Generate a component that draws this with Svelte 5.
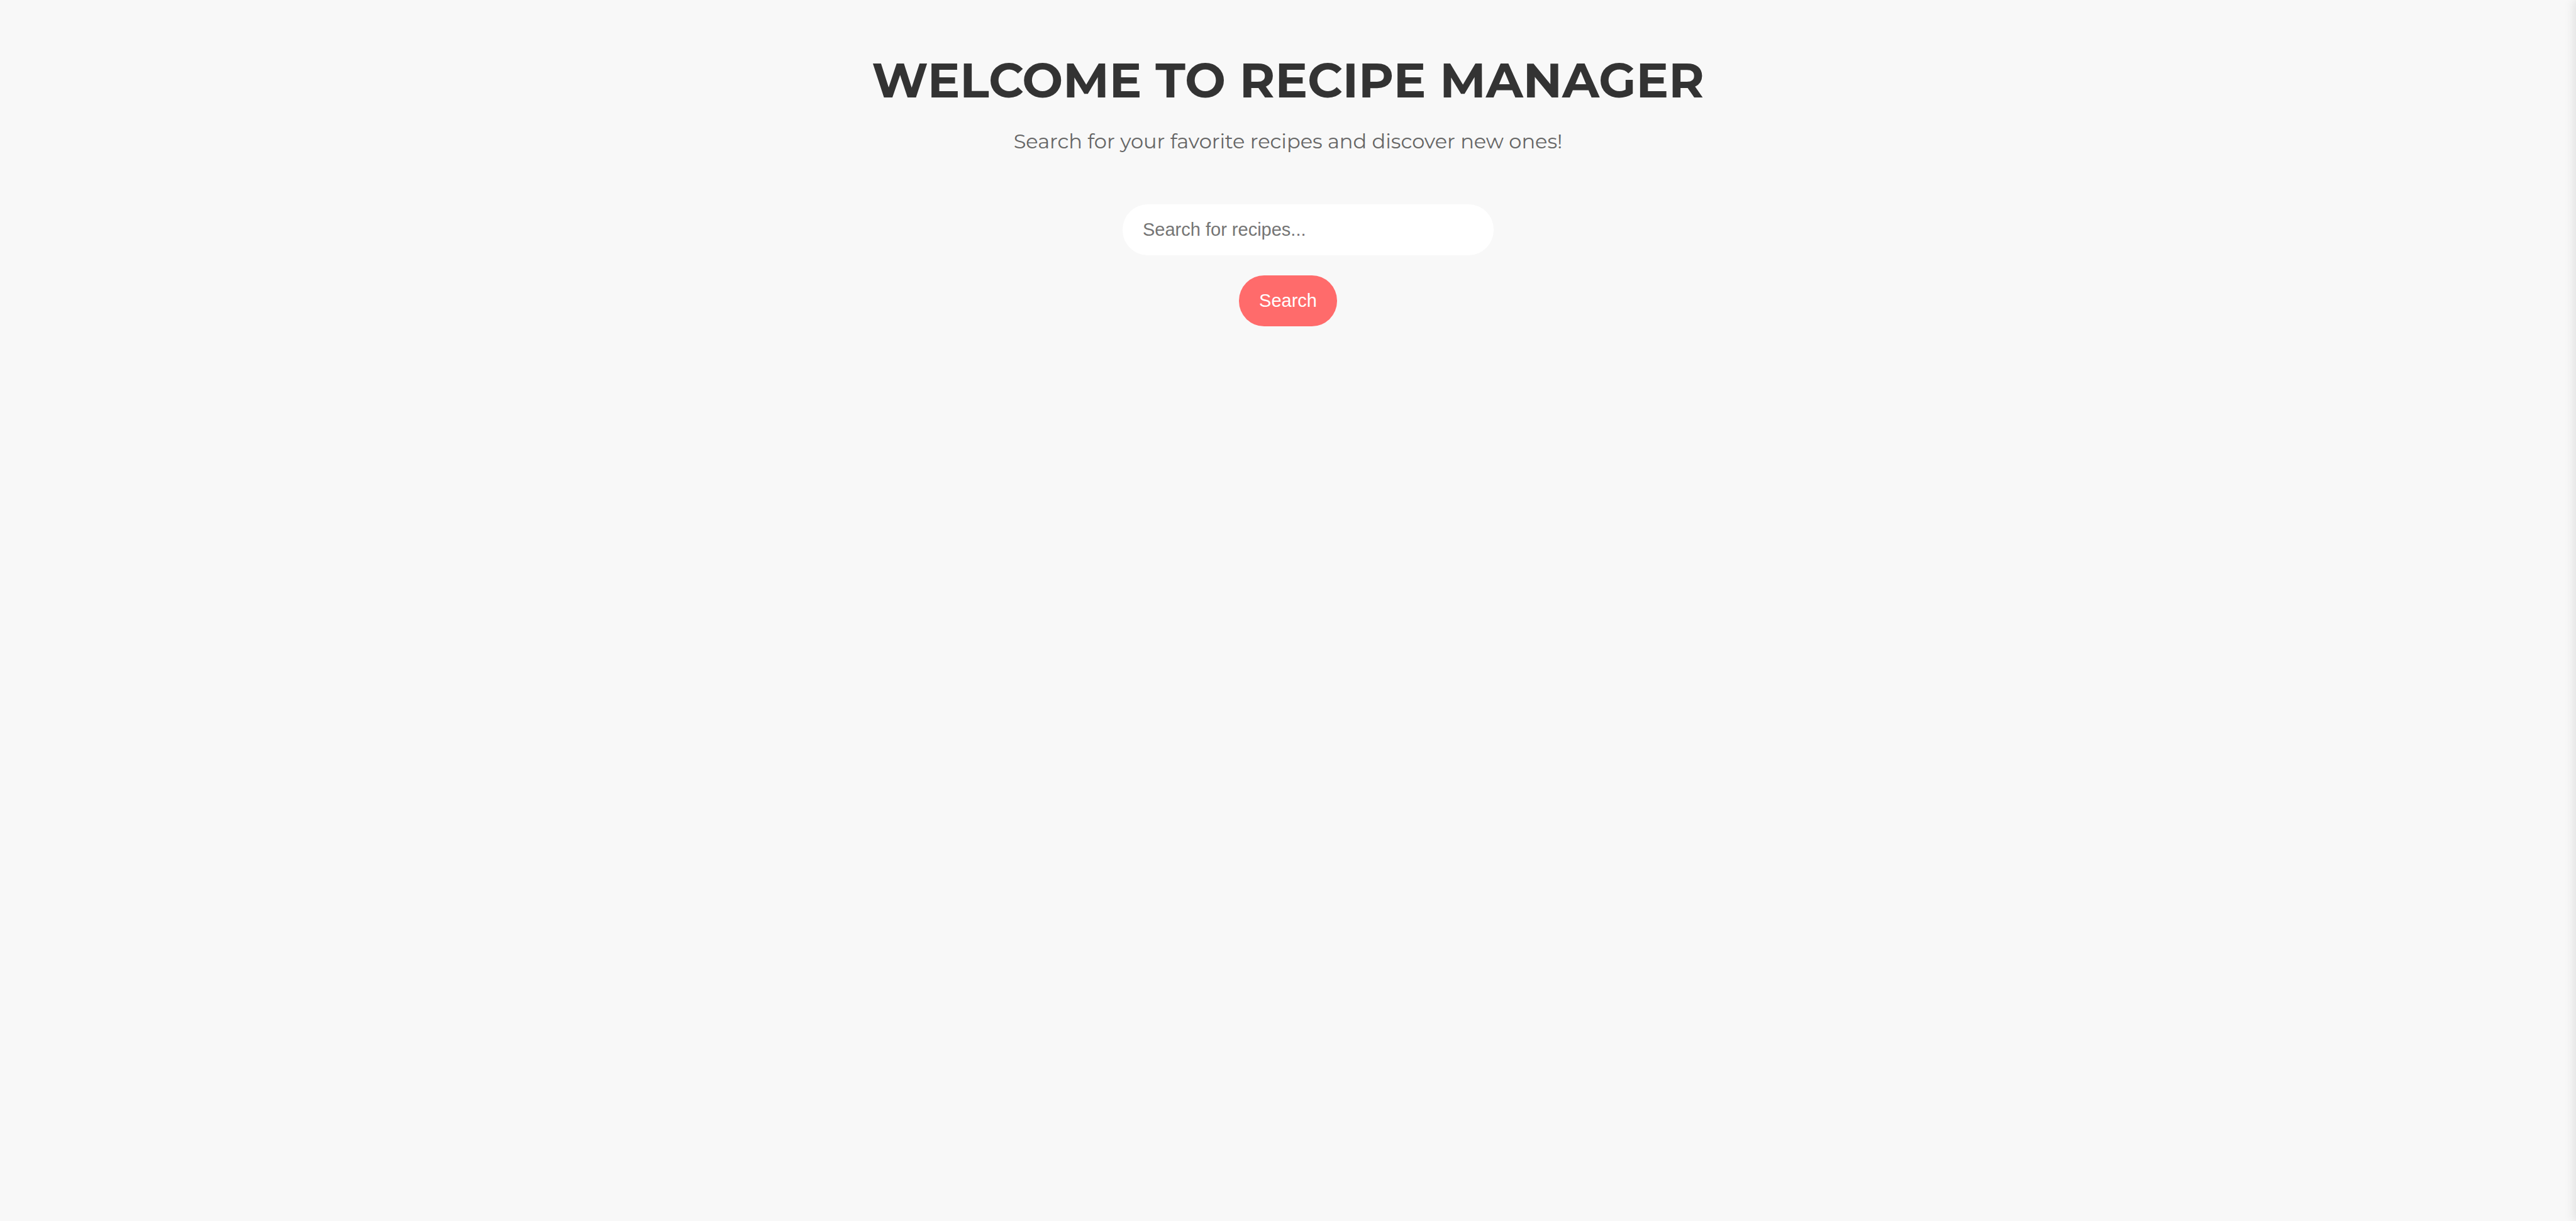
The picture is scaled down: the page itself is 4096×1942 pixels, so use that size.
<script>
  let query = $state('');
</script>

<main class="page">
  <header class="intro">
    <h1>WELCOME TO RECIPE MANAGER</h1>
    <p>Search for your favorite recipes and discover new ones!</p>
  </header>
  <form class="search" onsubmit={(event) => event.preventDefault()}>
    <input type="text" aria-label="Search for recipes" placeholder="Search for recipes..." bind:value={query} />
    <button type="submit">Search</button>
  </form>
</main>
<aside class="drawer" aria-hidden="true"></aside>

<style>
  :global(body) {
    margin: 0;
    background: #f8f8f8;
  }

  .page {
    display: flex;
    flex-direction: column;
    align-items: center;
    box-sizing: border-box;
    min-height: 100vh;
    padding: 79px 32px;
    gap: 80px;
    font-family: Montserrat, Inter, sans-serif;
    text-align: center;
  }

  .intro {
    display: flex;
    flex-direction: column;
    gap: 30px;
  }

  h1 {
    margin: 0;
    color: #333;
    font-size: 77px;
    font-weight: 700;
    line-height: 96px;
  }

  p {
    margin: 0;
    color: #666;
    font-size: 32px;
    line-height: 40px;
  }

  .search {
    display: flex;
    flex-direction: column;
    align-items: center;
    gap: 32px;
    width: 100%;
    max-width: 526px;
  }

  input,
  button {
    border: 0;
    border-radius: 40px;
    padding: 24px 32px;
    font: 29px/33px 'Liberation Sans', Arial, sans-serif;
  }

  /* The field's padding extends past the right side of the form column. */
  input {
    align-self: flex-start;
    box-sizing: content-box;
    width: 100%;
    height: 33px;
    background: #fff;
    color: #333;
    outline: none;
  }

  input::placeholder {
    color: #757575;
    opacity: 1;
  }

  button {
    background: #ff6b6b;
    color: #fff;
    cursor: pointer;
  }

  /* Closed side drawer: only its shadow reaches into the window. */
  .drawer {
    position: fixed;
    top: 0;
    right: -480px;
    width: 480px;
    height: 100vh;
    background: #fff;
    box-shadow: -3px 0 16px rgba(0, 0, 0, 0.1);
  }
</style>
